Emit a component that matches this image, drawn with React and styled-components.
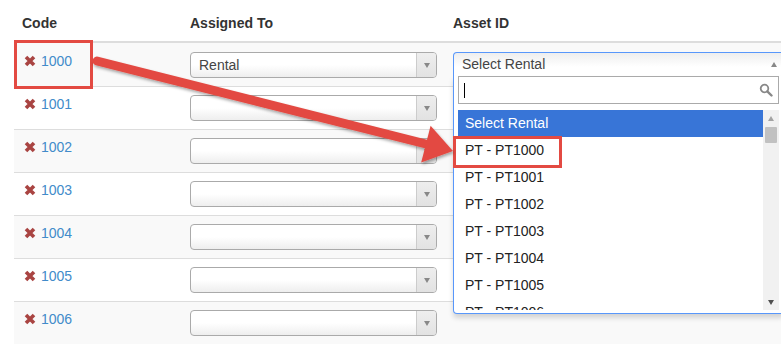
import React from "react";
import styled, { createGlobalStyle } from "styled-components";

const GlobalStyle = createGlobalStyle`
  html, body {
    margin: 0;
    padding: 0;
    background: #fff;
  }
  body {
    font-family: "Liberation Sans", Arial, sans-serif;
    font-size: 14px;
    line-height: 20px;
    color: #333;
  }
`;

const Page = styled.div`
  position: relative;
  width: 781px;
  height: 345px;
  overflow: hidden;
  box-sizing: border-box;
  padding: 5px 0 0 14px;
`;

const Table = styled.table`
  width: 800px;
  table-layout: fixed;
  border-collapse: separate;
  border-spacing: 0;

  tbody tr:first-child td {
    border-top-color: transparent;
  }
`;

const Th = styled.th`
  text-align: left;
  font-weight: bold;
  padding: 8px;
  line-height: 20px;
  border-bottom: 2px solid #ddd;
  vertical-align: bottom;
`;

const Row = styled.tr`
  background: ${(p) => (p.$striped ? "#f9f9f9" : "#fff")};
`;

const Td = styled.td`
  padding: 8px;
  border-top: 1px solid #ddd;
  vertical-align: top;
  line-height: 20px;
`;

const CodeCell = styled.div`
  display: flex;
  align-items: center;
  gap: 5px;
  padding-left: 2px;
  margin-top: -1px;
`;

const CodeLink = styled.a`
  color: #428bca;
  text-decoration: none;
`;

const Choice = styled.div`
  display: flex;
  height: 26px;
  box-sizing: border-box;
  border: 1px solid #aaa;
  border-radius: 4px;
  background: linear-gradient(to bottom, #fff 0%, #fff 50%, #eee 100%);
  color: #444;
  font-size: 14px;
  line-height: 24px;
  overflow: hidden;
`;

const ChoiceLabel = styled.span`
  flex: 1;
  padding-left: 8px;
  white-space: nowrap;
`;

const ChoiceArrow = styled.span`
  width: 19px;
  display: flex;
  align-items: center;
  justify-content: center;
  border-left: 1px solid #ccc;
  background: linear-gradient(to bottom, #eee 0%, #e2e2e2 100%);
`;

const Triangle = styled.span`
  width: 0;
  height: 0;
  border-left: 3.5px solid transparent;
  border-right: 3.5px solid transparent;
  ${(p) =>
    p.$up
      ? `border-bottom: 5px solid ${p.$color || "#888"};`
      : `border-top: 5px solid ${p.$color || "#888"};`}
`;

const AssetWrap = styled.div`
  position: relative;
  width: 331px;
  z-index: 2;
`;

const OpenChoice = styled.div`
  display: flex;
  height: 24px;
  box-sizing: border-box;
  border: 1px solid #5897fb;
  border-bottom: none;
  border-radius: 4px 4px 0 0;
  background: linear-gradient(to bottom, #eee 0%, #fff 60%);
  color: #444;
  line-height: 23px;
`;

const OpenArrow = styled.span`
  width: 19px;
  display: flex;
  align-items: center;
  justify-content: center;
`;

const Dropdown = styled.div`
  position: absolute;
  top: 100%;
  left: 0;
  width: 100%;
  box-sizing: border-box;
  border: 1px solid #5897fb;
  border-top: none;
  border-radius: 0 0 4px 4px;
  background: #fff;
  padding: 0 4px 3px;
  box-shadow: 0 4px 5px rgba(0, 0, 0, 0.15);
`;

const Search = styled.div`
  display: flex;
  align-items: center;
  height: 28px;
  box-sizing: border-box;
  border: 1px solid #aaa;
  background: #fff;
  padding: 0 5px 0 5px;
`;

const Caret = styled.span`
  width: 1px;
  height: 15px;
  background: #000;
`;

const SearchIcon = styled.svg`
  margin-left: auto;
`;

const Results = styled.div`
  display: flex;
  margin-top: 6px;
  height: 200px;
`;

const ResultList = styled.ul`
  flex: 1;
  list-style: none;
  margin: 0;
  padding: 0;
  overflow: hidden;
`;

const ResultItem = styled.li`
  height: 27px;
  line-height: 27px;
  padding: 0 7px;
  color: ${(p) => (p.$active ? "#fff" : "#222")};
  background: ${(p) => (p.$active ? "#3875d7" : "transparent")};
  white-space: nowrap;
`;

const Scrollbar = styled.div`
  width: 16px;
  background: #f1f1f1;
  display: flex;
  flex-direction: column;
  align-items: center;
`;

const ScrollButton = styled.div`
  height: 16px;
  width: 100%;
  display: flex;
  align-items: center;
  justify-content: center;
  margin-top: ${(p) => (p.$bottom ? "auto" : "0")};
`;

const Thumb = styled.div`
  width: 12px;
  height: 16px;
  background: #c1c1c1;
  border-radius: 1px;
  margin-top: 1px;
`;

const Overlay = styled.svg`
  position: absolute;
  top: 0;
  left: 0;
  z-index: 5;
  pointer-events: none;
`;

const RemoveIcon = () => (
  <svg width="12" height="12" viewBox="0 0 12 12">
    <path d="M2 2 L10 10 M10 2 L2 10" stroke="#a94442" strokeWidth="3.6" />
  </svg>
);

const codes = [1000, 1001, 1002, 1003, 1004, 1005, 1006];
const rentals = ["PT - PT1000", "PT - PT1001", "PT - PT1002", "PT - PT1003", "PT - PT1004", "PT - PT1005", "PT - PT1006"];

function AssetSelect() {
  return (
    <AssetWrap>
      <OpenChoice>
        <ChoiceLabel>Select Rental</ChoiceLabel>
        <OpenArrow>
          <Triangle $up />
        </OpenArrow>
      </OpenChoice>
      <Dropdown>
        <Search>
          <Caret />
          <SearchIcon width="14" height="14" viewBox="0 0 14 14">
            <circle cx="5.5" cy="5.5" r="3.8" fill="none" stroke="#888" strokeWidth="1.8" />
            <path d="M8.3 8.3 L12.5 12.5" stroke="#888" strokeWidth="2.4" strokeLinecap="round" />
          </SearchIcon>
        </Search>
        <Results>
          <ResultList>
            <ResultItem $active>Select Rental</ResultItem>
            {rentals.map((r) => (
              <ResultItem key={r}>{r}</ResultItem>
            ))}
          </ResultList>
          <Scrollbar>
            <ScrollButton>
              <Triangle $up $color="#a3a3a3" />
            </ScrollButton>
            <Thumb />
            <ScrollButton $bottom>
              <Triangle $color="#505050" />
            </ScrollButton>
          </Scrollbar>
        </Results>
      </Dropdown>
    </AssetWrap>
  );
}

export default function App() {
  return (
    <>
      <GlobalStyle />
      <Page>
        <Table>
          <colgroup>
            <col style={{ width: 168 }} />
            <col style={{ width: 263 }} />
            <col />
          </colgroup>
          <thead>
            <tr>
              <Th>Code</Th>
              <Th>Assigned To</Th>
              <Th>Asset ID</Th>
            </tr>
          </thead>
          <tbody>
            {codes.map((c, i) => (
              <Row key={c} $striped={i % 2 === 0}>
                <Td>
                  <CodeCell>
                    <RemoveIcon />
                    <CodeLink href="#">{c}</CodeLink>
                  </CodeCell>
                </Td>
                <Td>
                  <Choice>
                    <ChoiceLabel>{i === 0 ? "Rental" : ""}</ChoiceLabel>
                    <ChoiceArrow>
                      <Triangle />
                    </ChoiceArrow>
                  </Choice>
                </Td>
                <Td>{i === 0 && <AssetSelect />}</Td>
              </Row>
            ))}
          </tbody>
        </Table>
        <Overlay width="781" height="345" viewBox="0 0 781 345">
          <defs>
            <filter id="shadow" x="-10%" y="-20%" width="120%" height="160%">
              <feDropShadow dx="1" dy="2" stdDeviation="1.5" floodColor="#000" floodOpacity="0.35" />
            </filter>
          </defs>
          <rect x="15.5" y="41.5" width="76" height="46" fill="none" stroke="#e34a42" strokeWidth="3" />
          <rect x="454.5" y="137.5" width="106" height="29" fill="none" stroke="#e34a42" strokeWidth="3" />
          <g filter="url(#shadow)">
            <line x1="97" y1="61" x2="428" y2="144.5" stroke="#e34a42" strokeWidth="9" strokeLinecap="round" />
            <polygon points="430.6,125.7 453,151 421.2,162.5" fill="#e34a42" />
          </g>
        </Overlay>
      </Page>
    </>
  );
}
